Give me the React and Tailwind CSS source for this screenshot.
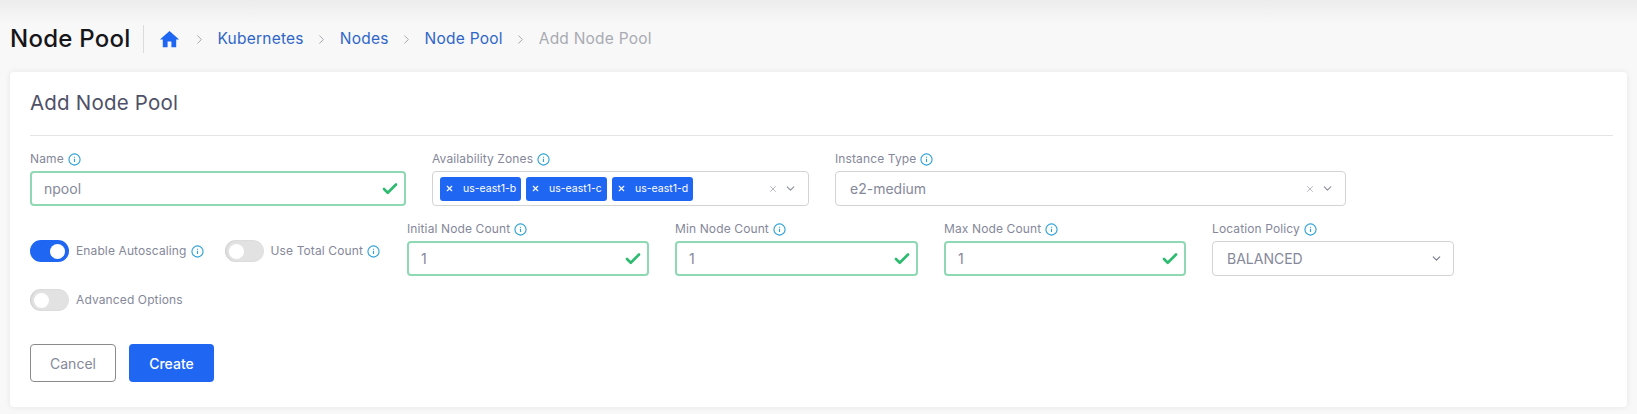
import { Check, ChevronDown, ChevronRight, X } from "lucide-react";

const font = { fontFamily: "Inter, sans-serif" };

function Info() {
  return (
    <svg viewBox="0 0 14 14" className="w-[13px] h-[13px] shrink-0" fill="none">
      <circle cx="7" cy="7" r="6" stroke="#2a9fd8" strokeWidth="1.2" />
      <path d="M7 6.2v3.6M7 4v1" stroke="#2a9fd8" strokeWidth="1.2" />
    </svg>
  );
}

function Label({ children }) {
  return (
    <div className="flex items-center gap-[4px] h-[14px] text-[12px] text-[#85889a] tracking-[0.01em] whitespace-nowrap">
      {children} <Info />
    </div>
  );
}

function CheckField({ label, value, width }) {
  return (
    <div className={width}>
      <Label>{label}</Label>
      <div className="mt-[5px] h-[35px] flex items-center justify-between pl-[12px] pr-[5px] border-2 border-[#8fd8b4] rounded-[4px] text-[14px] text-[#85889a]">
        <span>{value}</span>
        <Check size={18} strokeWidth={3.5} className="text-[#2dbb6f]" />
      </div>
    </div>
  );
}

function Toggle({ on, label, info }) {
  return (
    <div className="flex items-center">
      <div className={`w-[39px] h-[22px] rounded-full flex items-center px-[4px] ${on ? "bg-[#1f66f2] justify-end" : "bg-[#e2e2e2] shadow-[inset_1px_0_2px_rgba(0,0,0,0.1)]"}`}>
        <div className="w-[15px] h-[15px] rounded-full bg-white" />
      </div>
      <span className="ml-[7px] mr-[4px] text-[12px] text-[#85889a] tracking-[0.01em] whitespace-nowrap">{label}</span>
      {info && <Info />}
    </div>
  );
}

function Chip({ children }) {
  return (
    <div className="h-[24px] w-[81px] flex items-center bg-[#1f66f2] rounded-[3px] text-white text-[10.5px] pl-[5px] whitespace-nowrap">
      <X size={9} strokeWidth={3} className="mr-[9px] shrink-0" />
      {children}
    </div>
  );
}

function Crumb({ children, last }) {
  return (
    <>
      <ChevronRight size={15} strokeWidth={1.2} className="text-[#8b8f9a] mx-[10.5px]" />
      <span className={`text-[15.5px] tracking-[0.015em] ${last ? "text-[#a9abb3]" : "text-[#2f66c8]"}`}>{children}</span>
    </>
  );
}

function Clear() {
  return (
    <div className="flex items-center gap-[6px] text-[#8b8f9a]">
      <X size={10} strokeWidth={1.5} />
      <ChevronDown size={13} strokeWidth={2} />
    </div>
  );
}

export default function App() {
  return (
    <div style={font} className="h-[414px] overflow-hidden bg-[#f8f8f8] bg-gradient-to-b from-[#ececec] to-[#f8f8f8] to-[24px] bg-no-repeat px-[10px]">
      {/* Page header */}
      <div className="h-[72px] flex items-center pt-[6px]">
        <h1 className="text-[24px] font-medium text-[#16161a] tracking-[0.01em] leading-none">Node Pool</h1>
        <div className="w-px h-[28px] bg-[#dcdcdc] ml-[13px] mr-[14px]" />
        <svg viewBox="0 0 24 24" className="w-[23px] h-[23px]" fill="#1f66f2">
          <path d="M10 20v-6h4v6h5v-8h3L12 3 2 12h3v8z" />
        </svg>
        <Crumb>Kubernetes</Crumb>
        <Crumb>Nodes</Crumb>
        <Crumb>Node Pool</Crumb>
        <Crumb last>Add Node Pool</Crumb>
      </div>

      {/* Form card */}
      <div className="h-[335px] bg-white rounded-[4px] shadow-[0_0_6px_rgba(0,0,0,0.08)] pl-[20px] pr-[14px]">
        <div className="h-[64px] flex items-center border-b border-[#e4e4e4] text-[20.5px] text-[#4f5168] tracking-[0.01em]">
          Add Node Pool
        </div>

        <div className="flex gap-[26px] mt-[16px]">
          <CheckField label="Name" value="npool" width="w-[376px]" />
          <div className="w-[377px]">
            <Label>Availability Zones</Label>
            <div className="mt-[5px] h-[35px] flex items-center justify-between pl-[7px] pr-[11px] border border-[#d3d3d3] rounded-[4px]">
              <div className="flex gap-[5px]">
                <Chip>us-east1-b</Chip>
                <Chip>us-east1-c</Chip>
                <Chip>us-east1-d</Chip>
              </div>
              <Clear />
            </div>
          </div>
          <div className="w-[511px]">
            <Label>Instance Type</Label>
            <div className="mt-[5px] h-[35px] flex items-center justify-between pl-[14px] pr-[11px] border border-[#d3d3d3] rounded-[4px] text-[14px] text-[#85889a]">
              <span>e2-medium</span>
              <Clear />
            </div>
          </div>
        </div>

        <div className="flex mt-[16px]">
          <div className="w-[377px] flex gap-[21px] pt-[4px]">
            <Toggle on label="Enable Autoscaling" info />
            <Toggle label="Use Total Count" info />
          </div>
          <div className="flex gap-[26px]">
            <CheckField label="Initial Node Count" value="1" width="w-[242px]" />
            <CheckField label="Min Node Count" value="1" width="w-[243px]" />
            <CheckField label="Max Node Count" value="1" width="w-[242px]" />
            <div className="w-[242px]">
              <Label>Location Policy</Label>
              <div className="mt-[5px] h-[35px] flex items-center justify-between pl-[14px] pr-[10px] border border-[#d3d3d3] rounded-[4px] text-[14px] text-[#85889a]">
                <span>BALANCED</span>
                <ChevronDown size={13} strokeWidth={2} className="text-[#74788d]" />
              </div>
            </div>
          </div>
        </div>

        <div className="mt-[13px]">
          <Toggle label="Advanced Options" />
        </div>

        <div className="flex gap-[13px] mt-[33px]">
          <button className="w-[86px] h-[38px] border border-[#8a8a8a] rounded-[4px] bg-white text-[14px] text-[#85889a]">Cancel</button>
          <button className="w-[85px] h-[38px] rounded-[4px] bg-[#1f66f2] text-[14px] font-medium text-white">Create</button>
        </div>
      </div>
    </div>
  );
}
